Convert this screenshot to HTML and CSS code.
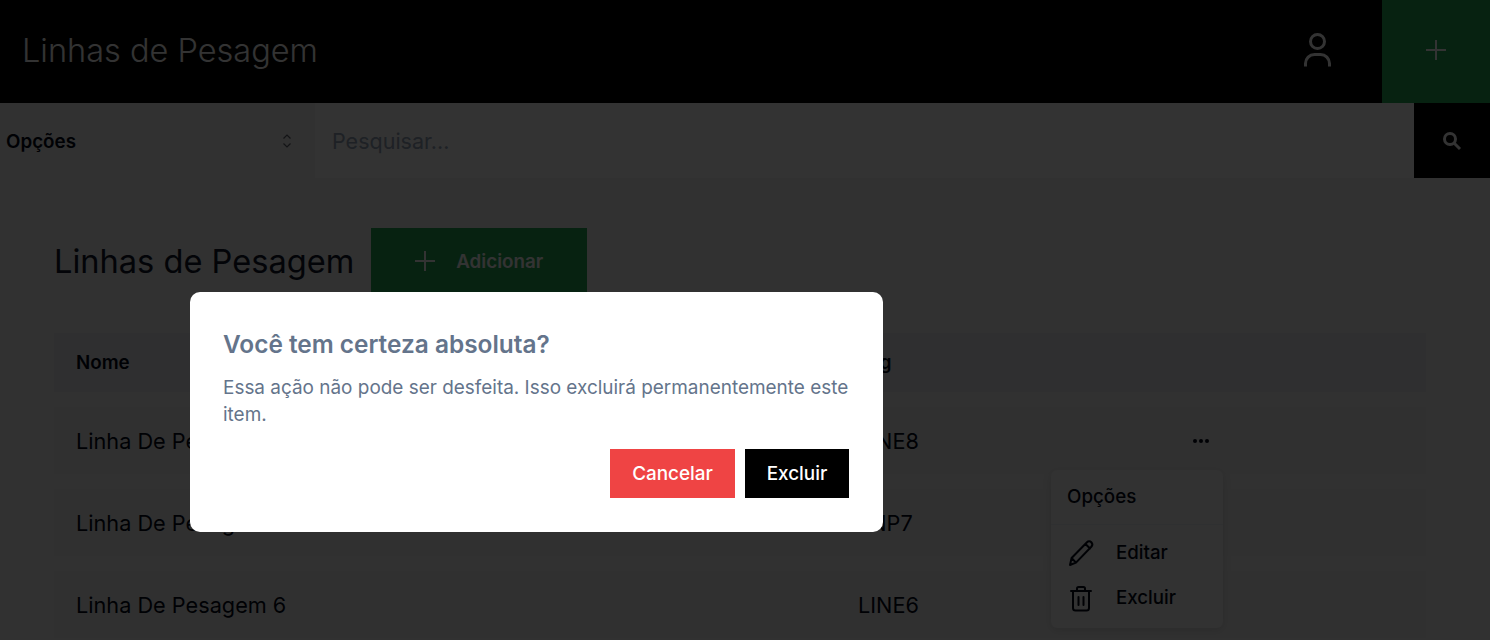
FILE: index.html
```html
<!DOCTYPE html>
<html lang="en">
<head>
  <meta charset="UTF-8" />
  <meta name="viewport" content="width=device-width, initial-scale=1.0"/>
  <title>Linhas de Pesagem</title>
  <link rel="stylesheet" href="styles.css">
</head>
<body>
  <header class="topbar">
    <h1 class="topbar-title">Linhas de Pesagem</h1>
    <div class="topbar-user">
      <svg width="27" height="34" viewBox="0 0 27 34" fill="none" stroke="currentColor" stroke-width="3">
        <circle cx="13.5" cy="8.5" r="7"/>
        <path d="M1.500 33.500v-3a9 9 0 0 1 9-9h6a9 9 0 0 1 9 9v3"/>
      </svg>
    </div>
    <button class="topbar-add">
      <svg width="20" height="20" viewBox="0 0 20 20" fill="none" stroke="currentColor" stroke-width="2">
        <path d="M10 0v20M0 10h20"/>
      </svg>
    </button>
  </header>

  <div class="searchbar">
    <div class="select">
      <span>Opções</span>
      <svg class="select-arrows" width="10" height="16" viewBox="0 0 10 16" fill="none" stroke="currentColor" stroke-width="1.2">
        <path d="M1.500 5.500 5 2l3.500 3.500M1.500 10.500 5 14l3.500-3.500"/>
      </svg>
    </div>
    <div class="search-input">Pesquisar...</div>
    <button class="search-btn">
      <svg width="20" height="20" viewBox="0 0 20 20" fill="none" stroke="currentColor" stroke-width="3">
        <circle cx="8" cy="8" r="5.500"/>
        <path d="m12 12 6 6"/>
      </svg>
    </button>
  </div>

  <main class="content">
    <div class="page-head">
      <h2 class="page-title">Linhas de Pesagem</h2>
      <button class="add-btn">
        <svg width="20" height="20" viewBox="0 0 20 20" fill="none" stroke="currentColor" stroke-width="2">
          <path d="M10 0v20M0 10h20"/>
        </svg>
        Adicionar
      </button>
    </div>

    <table class="lines">
      <thead>
        <tr><th class="col-name">Nome</th><th class="col-tag">Tag</th><th></th></tr>
      </thead>
      <tbody>
        <tr><td>Linha De Pesagem 8</td><td>LINE8</td><td class="col-menu"><span class="dots"><i></i><i></i><i></i></span></td></tr>
        <tr><td>Linha De Pesagem 7</td><td>LNP7</td><td></td></tr>
        <tr><td>Linha De Pesagem 6</td><td>LINE6</td><td></td></tr>
      </tbody>
    </table>
  </main>

  <!-- row menu left open behind the dialog -->
  <div class="menu">
    <div class="menu-title">Opções</div>
    <div class="menu-sep"></div>
    <div class="menu-item">
      <svg width="28" height="28" viewBox="0 0 28 28" fill="none" stroke="currentColor" stroke-width="2" stroke-linejoin="round" stroke-linecap="round">
        <path d="M3 26l1.600-7L20 3.200a3 3 0 0 1 4.300 0 3.400 3.400 0 0 1 0 4.600L9 23.600 3 26zM4.600 19 9 23.600M18.500 5l4.500 4.500"/>
      </svg>
      Editar
    </div>
    <div class="menu-item">
      <svg width="28" height="28" viewBox="0 0 28 28" fill="none" stroke="currentColor" stroke-width="2" stroke-linejoin="round" stroke-linecap="round">
        <path d="M4 7h20M10 7V4.500a1.500 1.500 0 0 1 1.500-1.500h5a1.500 1.500 0 0 1 1.500 1.500V7M6 7v17a2.500 2.500 0 0 0 2.500 2.500h11A2.500 2.500 0 0 0 22 24V7M11.500 13v8M16.500 13v8"/>
      </svg>
      Excluir
    </div>
  </div>

  <div class="overlay"></div>

  <div class="dialog">
    <h3 class="dialog-title">Você tem certeza absoluta?</h3>
    <p class="dialog-text">Essa ação não pode ser desfeita. Isso excluirá permanentemente este item.</p>
    <div class="dialog-actions">
      <button class="btn-cancel">Cancelar</button>
      <button class="btn-confirm">Excluir</button>
    </div>
  </div>
</body>
</html>
```

FILE: styles.css
```css
* {
  box-sizing: border-box;
}

html, body {
  height: 640px;
  overflow: hidden;
}

body {
  margin: 0;
  background: #f2f2f2;
  color: #020817;
  font-family: 'Inter', sans-serif;
}

button {
  border: none;
  font-family: inherit;
  padding: 0;
}

.topbar {
  display: flex;
  align-items: center;
  height: 103px;
  background: #000;
  color: #fff;
}

.topbar-title {
  flex: 1;
  margin: 0 0 3px;
  padding-left: 22px;
  font-size: 32.5px;
  font-weight: 300;
}

.topbar-user {
  display: flex;
  margin: 0 51px 4px 0;
}

.topbar-add {
  display: flex;
  align-items: center;
  justify-content: center;
  width: 108px;
  height: 103px;
  padding-bottom: 4px;
  background: #25a854;
  color: #fff;
}

.searchbar {
  display: flex;
  height: 75px;
}

.select {
  display: flex;
  align-items: center;
  justify-content: space-between;
  width: 315px;
  padding: 1px 23px 0 6px;
  font-size: 18.8px;
  font-weight: 600;
}

.select-arrows {
  opacity: .6;
}

.search-input {
  flex: 1;
  display: flex;
  align-items: center;
  padding-left: 17px;
  background: #fff;
  color: #94a3b8;
  font-size: 21.5px;
}

.search-btn {
  display: flex;
  align-items: center;
  justify-content: center;
  width: 76px;
  background: #000;
  color: #fff;
}

.content {
  padding: 50px 64px 0 54px;
}

.page-head {
  display: flex;
  align-items: center;
  gap: 17px;
}

.page-title {
  margin: 0;
  font-size: 32.6px;
  font-weight: 400;
  color: #0f172a;
}

.add-btn {
  display: flex;
  align-items: center;
  justify-content: center;
  gap: 21px;
  width: 216px;
  height: 66px;
  background: #25a854;
  color: #fff;
  font-size: 18.8px;
  font-weight: 600;
}

.lines {
  width: 100%;
  margin-top: 24px;
  border-collapse: separate;
  border-spacing: 0 15px;
  table-layout: fixed;
}

.lines th {
  height: 59px;
  padding: 0 22px 1px;
  background: #e9ebef;
  font-size: 18.8px;
  font-weight: 600;
  text-align: left;
}

.lines td {
  height: 67px;
  padding: 0 22px;
  background: #f0f0f0;
  font-size: 21.7px;
}

.col-name {
  width: 782px;
}

.col-tag {
  width: 320px;
}

.col-menu {
  padding-left: 37px !important;
}

.dots {
  display: inline-flex;
  gap: 2px;
  margin-bottom: 4px;
  vertical-align: middle;
}

.dots i {
  width: 4px;
  height: 4px;
  border-radius: 50%;
  background: #020817;
}

.menu {
  position: absolute;
  left: 1051px;
  top: 470px;
  width: 172px;
  height: 158px;
  padding: 0 16px;
  background: #f7f7f7;
  border-radius: 6px;
  box-shadow: 0 2px 8px rgba(0, 0, 0, .12);
}

.menu-title {
  height: 54px;
  line-height: 54px;
  font-size: 18.8px;
  font-weight: 500;
}

.menu-sep {
  height: 1px;
  margin: 0 -16px 5px;
  background: #eceef2;
}

.menu-item {
  display: flex;
  align-items: center;
  gap: 21px;
  height: 45px;
  font-size: 18.7px;
  font-weight: 500;
}

.overlay {
  position: fixed;
  inset: 0;
  background: rgba(0, 0, 0, .8);
}

.dialog {
  position: fixed;
  left: 190px;
  top: 292px;
  width: 693px;
  height: 240px;
  padding: 34px 34px 34px 33px;
  background: #fff;
  border-radius: 10px;
}

.dialog-title {
  margin: 0;
  font-size: 24.4px;
  line-height: 36px;
  font-weight: 600;
  color: #64748b;
}

.dialog-text {
  margin: 12px 0 0;
  font-size: 18.95px;
  line-height: 27px;
  color: #64748b;
}

.dialog-actions {
  display: flex;
  justify-content: flex-end;
  gap: 10px;
  margin-top: 21px;
}

.dialog-actions button {
  height: 49px;
  color: #fff;
  font-size: 18.9px;
  font-weight: 500;
}

.btn-cancel {
  width: 125px;
  background: #ef4444;
}

.btn-confirm {
  width: 104px;
  background: #000;
}
```
